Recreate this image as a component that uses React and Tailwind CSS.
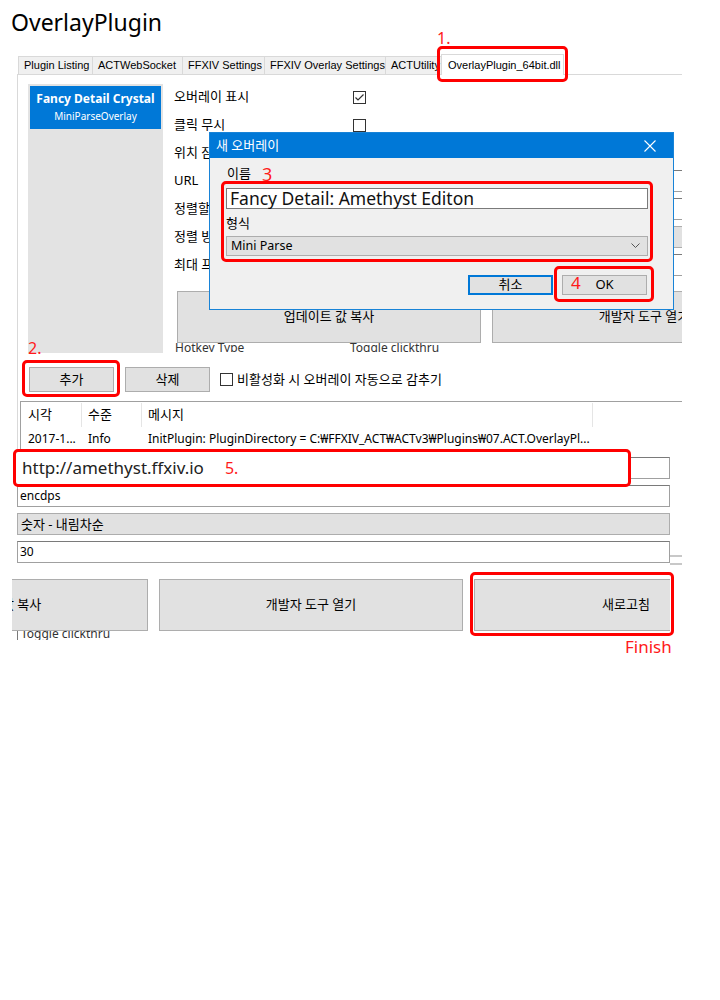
import React from 'react';

// Collage of OverlayPlugin settings screenshots with red step annotations

const tabs = [
  { label: 'Plugin Listing', w: 'w-[74px]' },
  { label: 'ACTWebSocket', w: 'w-[90px]' },
  { label: 'FFXIV Settings', w: 'w-[82px]' },
  { label: 'FFXIV Overlay Settings', w: 'w-[121px]' },
  { label: 'ACTUtility', w: 'w-[56px]' },
];

function CheckBox({ checked }) {
  return (
    <div className="w-[13px] h-[13px] shrink-0 border border-[#333] bg-white flex items-center justify-center">
      {checked && (
        <svg width="11" height="11" viewBox="0 0 11 11">
          <path d="M1.5 5.5 L4 8 L9.5 2.5" fill="none" stroke="#333" strokeWidth="1.2" />
        </svg>
      )}
    </div>
  );
}

function TextBox({ children, className = '' }) {
  return (
    <div className={`h-[22px] shrink-0 border border-[#a0a0a0] border-t-[#7a7a7a] bg-white text-[12px] leading-[20px] pl-[2px] ${className}`}>
      {children}
    </div>
  );
}

function Combo({ children, className = '' }) {
  return (
    <div className={`h-[22px] shrink-0 border border-[#adadad] bg-[#e1e1e1] text-[13px] leading-[20px] pl-[3px] ${className}`}>
      {children}
    </div>
  );
}

function BigButton({ children }) {
  return (
    <div className="w-[304px] h-[52px] shrink-0 bg-[#e1e1e1] border border-[#adadad] text-[13px] flex items-center justify-center">
      {children}
    </div>
  );
}

function Tabs() {
  return (
    <div className="ml-[17px] w-[665px] h-[21px] flex items-end border-b border-[#d9d9d9] font-['Liberation_Sans',sans-serif] text-[11px]">
      <div className="w-px" />
      {tabs.map((t) => (
        <div
          key={t.label}
          className={`${t.w} h-[18px] shrink-0 bg-[#f0f0f0] border border-b-0 border-r-0 border-[#d9d9d9] pl-[5px] leading-[17px] whitespace-nowrap overflow-hidden`}
        >
          {t.label}
        </div>
      ))}
      <div className="w-[123px] h-[21px] shrink-0 -mb-px bg-white border border-b-0 border-[#d9d9d9] pl-[6px] pt-[3px] leading-[14px] whitespace-nowrap">
        OverlayPlugin_64bit.dll
      </div>
    </div>
  );
}

const rows = [
  { label: '오버레이 표시', kind: 'check', checked: true },
  { label: '클릭 무시', kind: 'check' },
  { label: '위치 잠금', kind: 'check' },
  { label: 'URL', kind: 'text' },
  { label: '정렬할 키', kind: 'text' },
  { label: '정렬 방식', kind: 'combo' },
  { label: '최대 프레임', kind: 'text' },
];

function Panel() {
  return (
    <div className="ml-[17px] w-[665px] border-l border-[#d9d9d9] overflow-hidden">
      <div className="flex">
        {/* overlay list */}
        <div className="ml-[10px] mt-[9px] w-[135px] h-[269px] shrink-0 bg-[#e3e3e3] pt-[2px] px-[2px]">
          <div className="h-[43px] bg-[#0078d7] text-white flex flex-col items-center pt-[4px]">
            <div className="text-[12px] font-bold leading-[17px]">Fancy Detail Crystal</div>
            <div className="text-[10px] leading-[13px] mt-[3px]">MiniParseOverlay</div>
          </div>
        </div>

        {/* settings */}
        <div className="ml-[11px] mt-[8px] w-[508px] shrink-0">
          {rows.map((r) => (
            <div key={r.label} className="flex items-center h-[28px]">
              <div className="w-[179px] shrink-0 text-[13px]">{r.label}</div>
              {r.kind === 'check' && <CheckBox checked={r.checked} />}
              {r.kind === 'text' && <TextBox className="w-[340px]" />}
              {r.kind === 'combo' && <Combo className="w-[340px]" />}
            </div>
          ))}
          <div className="ml-[3px] mt-[12px] flex gap-[11px]">
            <BigButton>업데이트 값 복사</BigButton>
            <BigButton>개발자 도구 열기</BigButton>
          </div>
          <div className="h-[9px] overflow-hidden flex text-[12px] leading-[16px] text-[#333]">
            <div className="w-[176px] shrink-0 -mt-[3px] pl-[1px]">Hotkey Type</div>
            <div className="-mt-[3px]">Toggle clickthru</div>
          </div>
        </div>
      </div>

      {/* add / remove row */}
      <div className="mt-[14px] ml-[11px] h-[25px] flex items-center">
        <div className="w-[85px] h-[25px] bg-[#e1e1e1] border border-[#adadad] text-[13px] flex items-center justify-center">추가</div>
        <div className="ml-[11px] w-[85px] h-[25px] bg-[#e1e1e1] border border-[#adadad] text-[13px] flex items-center justify-center">삭제</div>
        <div className="ml-[10px]">
          <CheckBox />
        </div>
        <div className="ml-[4px] text-[13px]">비활성화 시 오버레이 자동으로 감추기</div>
      </div>

      {/* log list */}
      <div className="mt-[9px] ml-[2px] border-t border-l border-[#a0a0a0] text-[12px]">
        <div className="h-[26px] flex text-[13px]">
          <div className="w-[60px] shrink-0 pl-[7px] flex items-center">시각</div>
          <div className="w-[60px] shrink-0 pl-[6px] flex items-center border-l border-[#e5e5e5] my-[1px]">수준</div>
          <div className="w-[451px] shrink-0 pl-[6px] flex items-center border-l border-[#e5e5e5] my-[1px]">메시지</div>
          <div className="flex-1 border-l border-[#e5e5e5] my-[1px]" />
        </div>
        <div className="h-[21px] flex items-center whitespace-nowrap">
          <div className="w-[60px] shrink-0 pl-[7px]">2017-1...</div>
          <div className="w-[60px] shrink-0 pl-[7px]">Info</div>
          <div className="pl-[7px]">InitPlugin: PluginDirectory = C:₩FFXIV_ACT₩ACTv3₩Plugins₩07.ACT.OverlayPl...</div>
        </div>
      </div>
    </div>
  );
}

function SecondCrop() {
  return (
    <div className="ml-[12px] w-[658px] overflow-hidden">
      <TextBox className="mt-[8px] ml-[5px] w-[653px]" />
      <TextBox className="mt-[6px] ml-[5px] w-[653px]">encdps</TextBox>
      <Combo className="mt-[6px] ml-[5px] w-[653px]">숫자 - 내림차순</Combo>
      <TextBox className="mt-[6px] ml-[5px] w-[653px]">30</TextBox>
      <div className="-ml-[168px] mt-[16px] flex gap-[11px]">
        <BigButton>업데이트 값 복사</BigButton>
        <BigButton>개발자 도구 열기</BigButton>
        <BigButton>새로고침</BigButton>
      </div>
      <div className="ml-[5px] h-[9px] overflow-hidden border-l border-[#7a7a7a] text-[12px] leading-[16px] text-[#333]">
        <div className="-mt-[5px] pl-[3px]">Toggle clickthru</div>
      </div>
    </div>
  );
}

function Dialog() {
  return (
    <div className="absolute left-[209px] top-[132px] w-[465px] h-[178px] border border-[#1883d7] bg-[#f0f0f0]">
      <div className="h-[25px] bg-[#0078d7] flex items-center justify-between pl-[6px] pr-[17px] text-white text-[13px]">
        <span>새 오버레이</span>
        <svg width="12" height="12" viewBox="0 0 12 12">
          <path d="M0.5 0.5 L11.5 11.5 M11.5 0.5 L0.5 11.5" stroke="#fff" strokeWidth="1.1" />
        </svg>
      </div>
      <div className="mt-[6px] pl-[17px] h-[20px] flex items-center text-[13px]">
        <span>이름</span>
        <span className="ml-[11px] text-[18px] text-[#ff1a1a] leading-[20px]">3</span>
      </div>
      <div className="mt-[4px] ml-[16px] w-[422px] h-[21px] border border-[#7a7a7a] bg-white pl-[3px] text-[17.5px] leading-[19px] whitespace-nowrap text-[#111]">
        Fancy Detail: Amethyst Editon
      </div>
      <div className="mt-[4px] pl-[16px] h-[20px] leading-[20px] text-[13px]">형식</div>
      <div className="mt-[3px] ml-[16px] w-[422px] h-[20px] border border-[#adadad] bg-[#e1e1e1] pl-[4px] pr-[7px] flex items-center justify-between text-[12.5px]">
        <span>Mini Parse</span>
        <svg width="9" height="6" viewBox="0 0 9 6">
          <path d="M0.5 0.5 L4.5 4.5 L8.5 0.5" fill="none" stroke="#555" strokeWidth="1" />
        </svg>
      </div>
      <div className="mt-[19px] pr-[26px] flex justify-end gap-[9px] text-[13px]">
        <div className="w-[85px] h-[20px] border-2 border-[#0078d7] bg-[#e1e1e1] flex items-center justify-center">취소</div>
        <div className="w-[85px] h-[20px] border border-[#adadad] bg-[#e1e1e1] flex items-center justify-center">OK</div>
      </div>
    </div>
  );
}

export default function App() {
  return (
    <div className="relative w-[720px] h-[1000px] overflow-hidden bg-white text-black font-['Noto_Sans','Noto_Sans_CJK_KR',sans-serif]">
      <div className="h-[54px] pl-[11px] pt-[7px] text-[23px] leading-[30px]">OverlayPlugin</div>
      <Tabs />
      <Panel />
      <SecondCrop />
      <div className="absolute left-[670px] top-[555px] w-[12px] h-[10px] border-y-2 border-[#c8c8c8]" />

      <Dialog />

      {/* annotations */}
      <div className="absolute left-[437px] top-[28px] text-[16px] leading-[20px] text-[#ff1a1a]">1.</div>
      <div className="absolute left-[437px] top-[46px] w-[131px] h-[36px] border-[3px] border-[#ff0000] rounded-[5px]" />

      <div className="absolute left-[28px] top-[338px] text-[16px] leading-[20px] text-[#ff1a1a]">2.</div>
      <div className="absolute left-[22px] top-[360px] w-[98px] h-[37px] border-[3px] border-[#ff0000] rounded-[5px]" />

      <div className="absolute left-[221px] top-[181px] w-[432px] h-[81px] border-[3px] border-[#ff0000] rounded-[5px]" />

      <div className="absolute left-[554px] top-[266px] w-[100px] h-[36px] border-[3px] border-[#ff0000] rounded-[5px]" />
      <div className="absolute left-[571px] top-[273px] text-[17px] leading-[20px] text-[#ff1a1a]">4</div>

      <div className="absolute left-[13px] top-[449px] w-[618px] h-[38px] border-[3px] border-[#ff0000] rounded-[5px] bg-white flex items-center pl-[6px] whitespace-nowrap">
        <span className="text-[17px] text-[#222]">http://amethyst.ffxiv.io</span>
        <span className="ml-[21px] text-[16px] text-[#ff1a1a]">5.</span>
      </div>

      <div className="absolute left-[470px] top-[572px] w-[204px] h-[64px] border-[3px] border-[#ff0000] rounded-[5px]" />
      <div className="absolute left-[625px] top-[636px] text-[17px] leading-[22px] text-[#ff1a1a]">Finish</div>
    </div>
  );
}
